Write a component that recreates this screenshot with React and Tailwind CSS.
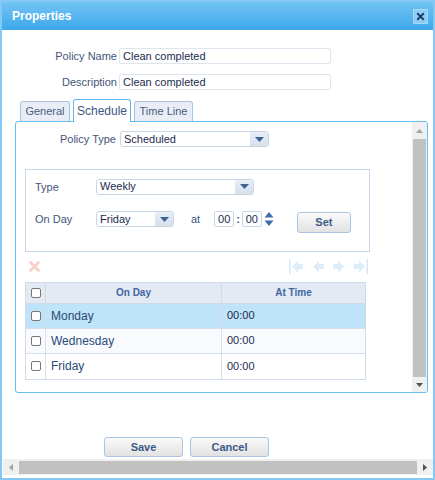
import { X } from "lucide-react";

const font = { fontFamily: '"Liberation Sans", Arial, sans-serif' };

function Select({ value, width, arrowW = 18 }) {
  return (
    <div
      className={`${width} h-[16px] flex items-center border border-[#c9d6e6] rounded-[3px] bg-white overflow-hidden`}
    >
      <span className="flex-1 pl-[3px] text-[11px] text-[#1d2b4f] leading-none">{value}</span>
      <div
        className="h-full flex items-center justify-center bg-gradient-to-b from-[#e7eef7] to-[#d5e1ee]"
        style={{ width: arrowW }}
      >
        <svg width="9" height="5" viewBox="0 0 9 5">
          <path d="M0 0h9L4.5 5z" fill="#3d6391" />
        </svg>
      </div>
    </div>
  );
}

function Button({ children, className }) {
  return (
    <button
      className={`${className} rounded-[3px] border border-[#a9c4e2] bg-gradient-to-b from-[#fafafa] to-[#e2e2e2] text-[11px] font-bold text-[#3b5a86]`}
    >
      {children}
    </button>
  );
}

function Check() {
  return <div className="w-[10px] h-[10px] border border-[#777] rounded-[2px] bg-white" />;
}

function NavArrow({ dir, bar }) {
  // light, disabled pager arrows
  const left = dir === "left";
  return (
    <svg width="16" height="15" viewBox="0 0 16 15">
      {bar && left && <rect x="0" y="0" width="1.5" height="15" fill="#d3e7f7" />}
      {left ? (
        <path d="M3 7.5l6-6v3.5h5v5H9V14z" fill="#ddeefa" />
      ) : (
        <path d="M13 7.5l-6-6v3.5H2v5h5V14z" fill="#ddeefa" />
      )}
      {bar && !left && <rect x="14.5" y="0" width="1.5" height="15" fill="#d3e7f7" />}
    </svg>
  );
}

const rows = [
  { day: "Monday", time: "00:00", bg: "bg-[#bfe3f8]" },
  { day: "Wednesday", time: "00:00", bg: "bg-[#f8fafd]" },
  { day: "Friday", time: "00:00", bg: "bg-white" },
];

export default function App() {
  return (
    <div
      className="w-[435px] h-[480px] border-2 border-[#84c9f4] bg-white flex flex-col overflow-hidden"
      style={font}
    >
      {/* Title bar */}
      <div className="h-[28px] shrink-0 flex items-center justify-between pl-[10px] pr-[5px] bg-gradient-to-b from-[#71c4f4] to-[#3ba7ea]">
        <span className="text-[12px] font-bold text-white">Properties</span>
        <div className="w-[15px] h-[15px] mt-[1px] flex items-center justify-center bg-[#8ccdf4] border border-[#a6d8f6]">
          <X className="w-[11px] h-[11px] text-[#1e3a6b]" strokeWidth={4} />
        </div>
      </div>

      {/* Body */}
      <div className="flex-1 flex flex-col">
        <div className="flex flex-col gap-[9px] mt-[18px]">
          <div className="flex items-center">
            <span className="w-[115px] text-right text-[11px] text-[#44557a]">Policy Name</span>
            <div className="ml-[2px] w-[212px] h-[16px] flex items-center pl-[3px] border border-[#dde5ef] rounded-[2px] text-[11px] text-[#1d2b4f]">
              Clean completed
            </div>
          </div>
          <div className="flex items-center">
            <span className="w-[115px] text-right text-[11px] text-[#44557a]">Description</span>
            <div className="ml-[2px] w-[212px] h-[16px] flex items-center pl-[3px] border border-[#dde5ef] rounded-[2px] text-[11px] text-[#1d2b4f]">
              Clean completed
            </div>
          </div>
        </div>

        {/* Tabs */}
        <div className="mt-[9px] ml-[18px] flex items-end gap-[3px] h-[22px] relative z-10">
          <div className="w-[50px] h-[20px] flex items-center justify-center border border-b-0 border-[#a9c3dd] rounded-t-[3px] bg-[#e9eef6] text-[11px] text-[#4a5b7e]">
            General
          </div>
          <div className="w-[58px] h-[23px] -mb-[1px] flex items-center justify-center border border-b-0 border-[#5cb6ec] rounded-t-[3px] bg-white text-[12px] text-[#3d5683]">
            Schedule
          </div>
          <div className="w-[59px] h-[20px] flex items-center justify-center border border-b-0 border-[#a9c3dd] rounded-t-[3px] bg-[#e9eef6] text-[11px] text-[#4a5b7e]">
            Time Line
          </div>
        </div>

        {/* Tab panel */}
        <div className="ml-[13px] w-[413px] h-[272px] border border-[#66bdf0] rounded-[3px] flex overflow-hidden">
          <div className="flex-1 flex flex-col">
            <div className="flex items-center mt-[9px]">
              <span className="w-[100px] text-right text-[11px] text-[#44557a]">Policy Type</span>
              <div className="ml-[4px]">
                <Select value="Scheduled" width="w-[149px]" />
              </div>
            </div>

            {/* Recurrence box */}
            <div className="ml-[9px] mt-[21px] w-[345px] h-[83px] border border-[#c6d6e8] flex flex-col px-[9px] pt-[9px]">
              <div className="flex items-center">
                <span className="w-[61px] text-[11px] text-[#44557a]">Type</span>
                <Select value="Weekly" width="w-[158px]" />
              </div>
              <div className="flex items-center mt-[10px]">
                <span className="w-[61px] text-[11px] text-[#44557a]">On Day</span>
                <Select value="Friday" width="w-[78px]" />
                <span className="ml-[17px] text-[11px] text-[#44557a]">at</span>
                <div className="ml-[14px] w-[20px] h-[16px] flex items-center justify-center border border-[#c9d6e6] rounded-[2px] text-[11px] text-[#1d2b4f]">
                  00
                </div>
                <span className="mx-[2px] text-[11px] text-[#44557a] font-bold">:</span>
                <div className="w-[20px] h-[16px] flex items-center justify-center border border-[#c9d6e6] rounded-[2px] text-[11px] text-[#1d2b4f]">
                  00
                </div>
                <svg className="ml-[2px]" width="10" height="14" viewBox="0 0 10 14">
                  <path d="M5 0l4.5 5.5h-9z" fill="#3f6ea8" />
                  <path d="M5 14l4.5-5.5h-9z" fill="#3f6ea8" />
                </svg>
                <Button className="ml-[23px] mt-[7px] w-[54px] h-[21px]">Set</Button>
              </div>
            </div>

            {/* Toolbar */}
            <div className="ml-[9px] w-[345px] h-[30px] flex items-center justify-between pl-[4px]">
              <svg width="11" height="11" viewBox="0 0 11 11">
                <path d="M1.5 1.5l8 8M9.5 1.5l-8 8" stroke="#f8cfc6" strokeWidth="2.6" strokeLinecap="round" />
              </svg>
              <div className="flex items-center gap-[5px] mr-[2px]">
                <NavArrow dir="left" bar />
                <NavArrow dir="left" />
                <NavArrow dir="right" />
                <NavArrow dir="right" bar />
              </div>
            </div>

            {/* Grid */}
            <div className="ml-[9px] w-[341px] border border-[#cfdbe8]">
              <div className="grid grid-cols-[20px_176px_1fr] h-[21px] bg-[#e4eaf3] border-b border-[#cfdbe8]">
                <div className="flex items-center justify-center border-r border-[#cfdbe8]">
                  <Check />
                </div>
                <div className="flex items-center justify-center border-r border-[#cfdbe8] text-[10px] font-bold text-[#3d67a3]">
                  On Day
                </div>
                <div className="flex items-center justify-center text-[10px] font-bold text-[#3d67a3]">
                  At Time
                </div>
              </div>
              {rows.map((r, i) => (
                <div
                  key={r.day}
                  className={`grid grid-cols-[20px_176px_1fr] h-[25px] ${r.bg} ${i < rows.length - 1 ? "border-b border-[#d6e0ec]" : ""}`}
                >
                  <div className="flex items-center justify-center border-r border-[#d6e0ec]">
                    <Check />
                  </div>
                  <div className="flex items-center pl-[5px] border-r border-[#d6e0ec] text-[12px] text-[#2b4a77]">
                    {r.day}
                  </div>
                  <div className="flex items-center pl-[5px] text-[11px] text-[#1d2b4f]">{r.time}</div>
                </div>
              ))}
            </div>
          </div>

          {/* Vertical scrollbar */}
          <div className="w-[15px] bg-[#f0f0f0] flex flex-col items-center">
            <div className="h-[17px] flex items-center justify-center">
              <svg width="7" height="4" viewBox="0 0 7 4">
                <path d="M3.5 0L7 4H0z" fill="#a3a3a3" />
              </svg>
            </div>
            <div className="flex-1 w-[13px] bg-[#c1c1c1]" />
            <div className="h-[15px] flex items-center justify-center">
              <svg width="7" height="4" viewBox="0 0 7 4">
                <path d="M3.5 4L7 0H0z" fill="#505050" />
              </svg>
            </div>
          </div>
        </div>

        {/* Footer buttons */}
        <div className="mt-[44px] ml-[102px] flex gap-[7px]">
          <Button className="w-[79px] h-[20px]">Save</Button>
          <Button className="w-[79px] h-[20px]">Cancel</Button>
        </div>

        {/* Horizontal scrollbar */}
        <div className="mt-[2px] ml-[1px] h-[16px] bg-[#f0f0f0] flex items-center">
          <div className="w-[16px] flex items-center justify-center">
            <svg width="4" height="7" viewBox="0 0 4 7">
              <path d="M0 3.5L4 0v7z" fill="#a3a3a3" />
            </svg>
          </div>
          <div className="flex-1 h-[13px] bg-[#c1c1c1]" />
          <div className="w-[16px] flex items-center justify-center">
            <svg width="4" height="7" viewBox="0 0 4 7">
              <path d="M4 3.5L0 0v7z" fill="#505050" />
            </svg>
          </div>
        </div>
      </div>
    </div>
  );
}
